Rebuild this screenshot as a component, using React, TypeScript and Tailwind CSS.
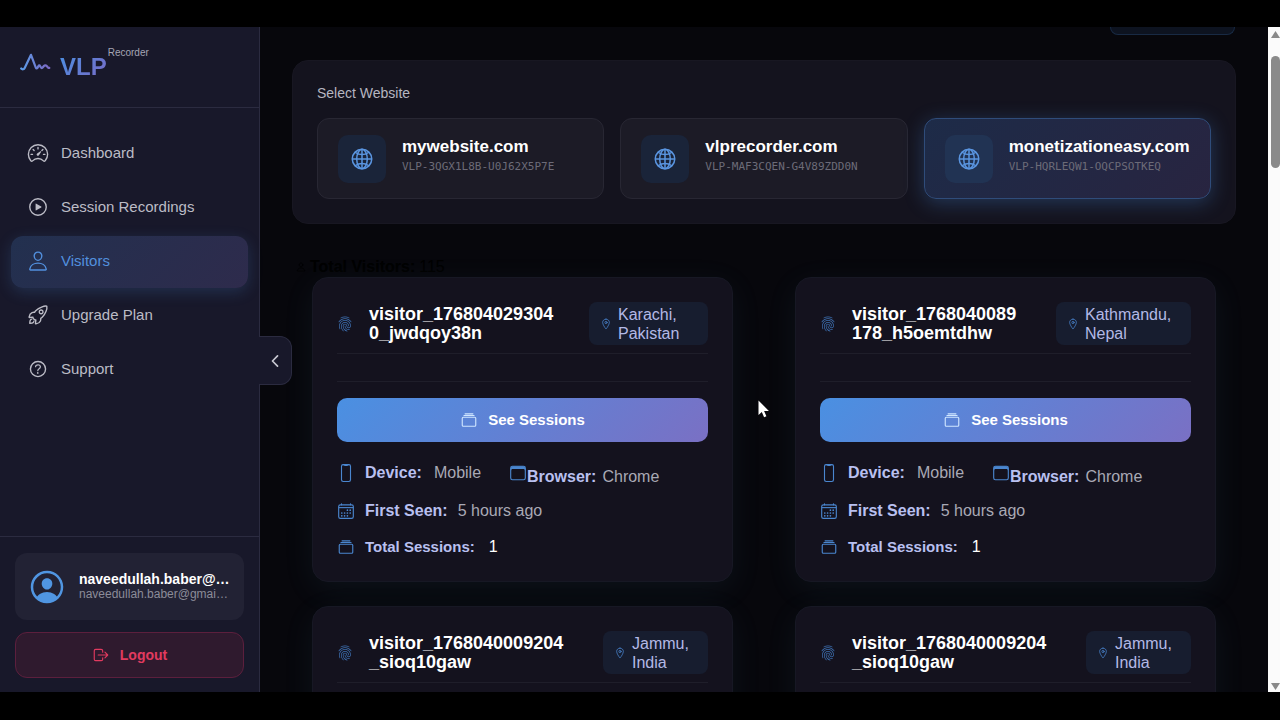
import type { ReactNode } from "react";
import clsx from "clsx";
import {
  IoAlbumsOutline,
  IoBrowsersOutline,
  IoCalendarOutline,
  IoChevronBack,
  IoFingerPrintOutline,
  IoGlobeOutline,
  IoHelpCircleOutline,
  IoLocationOutline,
  IoLogOutOutline,
  IoPersonCircleOutline,
  IoPersonOutline,
  IoPhonePortraitOutline,
  IoPlayCircleOutline,
  IoRocketOutline,
  IoSpeedometerOutline,
} from "react-icons/io5";

const navItems = [
  { label: "Dashboard", icon: IoSpeedometerOutline },
  { label: "Session Recordings", icon: IoPlayCircleOutline },
  { label: "Visitors", icon: IoPersonOutline, active: true },
  { label: "Upgrade Plan", icon: IoRocketOutline },
  { label: "Support", icon: IoHelpCircleOutline },
];

const websites = [
  { name: "mywebsite.com", code: "VLP-3QGX1L8B-U0J62X5P7E" },
  { name: "vlprecorder.com", code: "VLP-MAF3CQEN-G4V89ZDD0N" },
  { name: "monetizationeasy.com", code: "VLP-HQRLEQW1-OQCPSOTKEQ", selected: true },
];

const visitors = [
  { id: "visitor_1768040293040_jwdqoy38n", city: "Karachi,", country: "Pakistan", badge: "w-[119px]" },
  { id: "visitor_1768040089178_h5oemtdhw", city: "Kathmandu,", country: "Nepal", badge: "w-[135px]" },
  { id: "visitor_1768040009204_sioq10gaw", city: "Jammu,", country: "India", badge: "w-[105px]" },
  { id: "visitor_1768040009204_sioq10gaw", city: "Jammu,", country: "India", badge: "w-[105px]" },
];

function Logo() {
  return (
    <div className="flex h-[81px] shrink-0 items-start border-b border-[#2b2b40] px-5">
      <svg viewBox="0 0 32 24" className="mt-6 h-6 w-8" fill="none">
        <defs>
          <linearGradient id="logo" x1="0" y1="0" x2="1" y2="0">
            <stop offset="0" stopColor="#5b9be6" />
            <stop offset="1" stopColor="#7b68c4" />
          </linearGradient>
        </defs>
        <path
          d="M1.200 17.500c1.200 1.300 2.800 1 3.600-.8L11 3.800l4.800 12.800c.5 1.200 1.500 1 1.900 0l.8-1.600c.4-.8 1.200-.8 1.600 0l.8 1.500c.5.8 1.300.8 1.800 0l1.200-1.500c.8-.9 2-.9 2.800 0l1.600 1.900h1"
          stroke="url(#logo)"
          strokeWidth="2.200"
          strokeLinecap="round"
          strokeLinejoin="round"
        />
      </svg>
      <span className="mt-6 ml-2 bg-[linear-gradient(135deg,#4a90e2,#7b68c4)] bg-clip-text text-2xl font-bold text-transparent">
        VLP
      </span>
      <span className="mt-[18px] ml-px text-[10px] leading-4 text-[#a5a5b4]">Recorder</span>
    </div>
  );
}

function Sidebar() {
  return (
    <aside className="relative z-10 flex w-[260px] shrink-0 flex-col border-r border-[#2b2b40] bg-[#18182a]">
      <Logo />
      <nav className="flex flex-1 flex-col gap-0.5 px-[11px] pt-5">
        {navItems.map(({ label, icon: Icon, active }) => (
          <a
            key={label}
            href="#"
            className={clsx(
              "flex h-[52px] items-center gap-3 rounded-xl px-4 pb-0.5 text-[15px]",
              active
                ? "bg-[linear-gradient(135deg,#22304f,#2e2b4c)] text-[#5290de] shadow-[0_4px_15px_rgba(74,144,226,0.2)]"
                : "text-[#bcbcc6]",
            )}
          >
            <Icon className="size-[22px] shrink-0" />
            {label}
          </a>
        ))}
      </nav>
      <div className="flex flex-col gap-3 border-t border-[#2b2b40] px-[15px] pt-4 pb-3.5">
        <div className="flex h-[67px] items-center gap-3 rounded-xl bg-[#222234] pr-2 pl-3">
          <IoPersonCircleOutline className="size-10 shrink-0 text-[#5096e2]" />
          <div className="min-w-0 flex-1 whitespace-nowrap">
            <p className="text-sm leading-[15px] font-bold text-white">naveedullah.baber@…</p>
            <p className="text-xs leading-[15px] text-[#8c8c99]">naveedullah.baber@gmai…</p>
          </div>
        </div>
        <button className="flex h-[46px] items-center justify-center gap-2.5 rounded-xl border border-[#5c1f3d] bg-[#2f1a2e] text-sm font-bold text-[#e23a5f]">
          <IoLogOutOutline className="size-[18px]" />
          Logout
        </button>
      </div>
      <button
        aria-label="Collapse sidebar"
        className="absolute top-[309px] left-full flex h-[49px] w-[33px] items-center justify-center rounded-r-xl border border-l-0 border-[#2b2b40] bg-[#18182a] text-[#c8c8d2]"
      >
        <IoChevronBack className="size-[18px]" />
      </button>
    </aside>
  );
}

function WebsitePicker() {
  return (
    <section className="rounded-2xl border border-[#181722] bg-[#14131e] p-6 pt-5">
      <h2 className="text-sm leading-6 text-[#b6b6c1]">Select Website</h2>
      <div className="mt-[13px] grid grid-cols-3 gap-4">
        {websites.map((site) => (
          <button
            key={site.name}
            className={clsx(
              "flex h-[81px] items-center gap-4 rounded-xl border px-5 text-left",
              site.selected
                ? "border-[#2f4c7a] bg-[linear-gradient(135deg,#1d2b48,#282440)] shadow-[0_4px_20px_rgba(74,144,226,0.3)]"
                : "border-[#282733] bg-[#1c1b26]",
            )}
          >
            <span
              className={clsx(
                "flex size-12 shrink-0 items-center justify-center rounded-[10px] text-[#5a95e0]",
                site.selected ? "bg-[#213353]" : "bg-[#1a2439]",
              )}
            >
              <IoGlobeOutline className="size-6" />
            </span>
            <span className="min-w-0 pb-1">
              <span className="block text-[17px] leading-5 font-bold text-white">{site.name}</span>
              <span className="block font-['DejaVu_Sans_Mono',monospace] text-[11px] leading-5 text-[#6c6b78]">
                {site.code}
              </span>
            </span>
          </button>
        ))}
      </div>
    </section>
  );
}

function Detail({ icon, label, children }: { icon: ReactNode; label: string; children: ReactNode }) {
  return (
    <div className="flex h-6 items-center">
      {icon}
      <span className="ml-2.5 font-bold text-[#b9c0f0]">{label}</span>
      {children}
    </div>
  );
}

function VisitorCard({ visitor }: { visitor: (typeof visitors)[number] }) {
  return (
    <article className="rounded-2xl border border-[#171824] bg-[#14121e] px-6 pt-6 pb-[22px] shadow-[0_8px_32px_rgba(90,160,190,0.08)]">
      <header className="flex items-center border-b border-[#1f1e2a] pb-2">
        <IoFingerPrintOutline className="size-4 shrink-0 text-[#3d6fb0]" />
        <h3 className="mr-8 ml-4 min-w-0 flex-1 text-lg leading-[19px] font-bold break-all text-white">{visitor.id}</h3>
        <div
          className={clsx(
            "flex h-[43px] shrink-0 items-center gap-1.5 rounded-lg bg-[#171d2f] px-[11px] leading-[19px] text-[#b3b9e6]",
            visitor.badge,
          )}
        >
          <IoLocationOutline className="size-3 shrink-0 text-[#4a86d0]" />
          <span>
            {visitor.city}
            <br />
            {visitor.country}
          </span>
        </div>
      </header>
      <div className="mt-[27px] border-t border-[#1f1e2a] pt-4">
        <button className="flex h-11 w-full items-center justify-center gap-2.5 rounded-[10px] bg-[linear-gradient(135deg,#4a90e2,#7a70c4)] text-[15px] font-bold text-white">
          <IoAlbumsOutline className="size-[18px] text-[#cfe6ff]" />
          See Sessions
        </button>
      </div>
      <div className="mt-[17px] flex flex-col gap-3">
        <div className="flex h-7 items-center gap-7">
          <Detail icon={<IoPhonePortraitOutline className="size-[18px] text-[#4a86cf]" />} label="Device:">
            <span className="ml-3 text-[#a9a9b5]">Mobile</span>
          </Detail>
          <div className="flex items-center leading-5">
            <IoBrowsersOutline className="size-[18px] text-[#4a86cf]" />
            <span className="pt-2 font-bold text-[#b9c0f0]">Browser:</span>
            <span className="ml-1.5 pt-2 text-[#a9a9b5]">Chrome</span>
          </div>
        </div>
        <Detail icon={<IoCalendarOutline className="size-[18px] text-[#4a86cf]" />} label="First Seen:">
          <span className="ml-2.5 text-[#a9a9b5]">5 hours ago</span>
        </Detail>
        <div className="text-[15px]">
          <Detail icon={<IoAlbumsOutline className="size-[18px] text-[#4a86cf]" />} label="Total Sessions:">
            <span className="ml-3.5 text-base text-white">1</span>
          </Detail>
        </div>
      </div>
    </article>
  );
}

function Scrollbar() {
  return (
    <div className="flex w-3 shrink-0 flex-col items-center bg-[#fbfbfb]">
      <svg viewBox="0 0 12 12" className="mt-0.5 size-3" fill="#8a8a8a">
        <path d="M7.500 2 12 9H3z" />
      </svg>
      <div className="mt-[15px] h-28 w-[9px] self-end rounded-full bg-[#8a8a8a]" />
      <svg viewBox="0 0 12 12" className="mt-auto size-3" fill="#8a8a8a">
        <path d="M3 3h9l-4.500 7z" />
      </svg>
    </div>
  );
}

export default function App() {
  return (
    <div className="flex h-screen overflow-hidden bg-black pt-[27px] pb-7 font-['Liberation_Sans',Arial,sans-serif] text-base">
      <Sidebar />
      <main className="min-w-0 flex-1 overflow-hidden bg-[#07070c] px-8">
        <div className="flex justify-end">
          <div className="mr-px h-2 w-[125px] rounded-b-xl border border-t-0 border-[#182a44] bg-[#0d1320]" />
        </div>
        <div className="mt-[25px]">
          <WebsitePicker />
        </div>
        <p className="mt-[33px] flex h-5 items-center gap-1 pl-1 text-black">
          <IoPersonOutline className="size-2.5" />
          <strong>Total Visitors:</strong> 115
        </p>
        <div className="grid grid-cols-2 gap-x-[62px] gap-y-6 px-5">
          {visitors.map((visitor, i) => (
            <VisitorCard key={i} visitor={visitor} />
          ))}
        </div>
      </main>
      <Scrollbar />
      <svg viewBox="0 0 12 18" className="pointer-events-none absolute top-[400px] left-[758px] z-20 h-[18px] w-3" fill="#fff">
        <path d="M.5.5v14.500l3.300-3 2.300 5.300 2.300-1-2.300-5.200h4.800z" />
      </svg>
    </div>
  );
}
